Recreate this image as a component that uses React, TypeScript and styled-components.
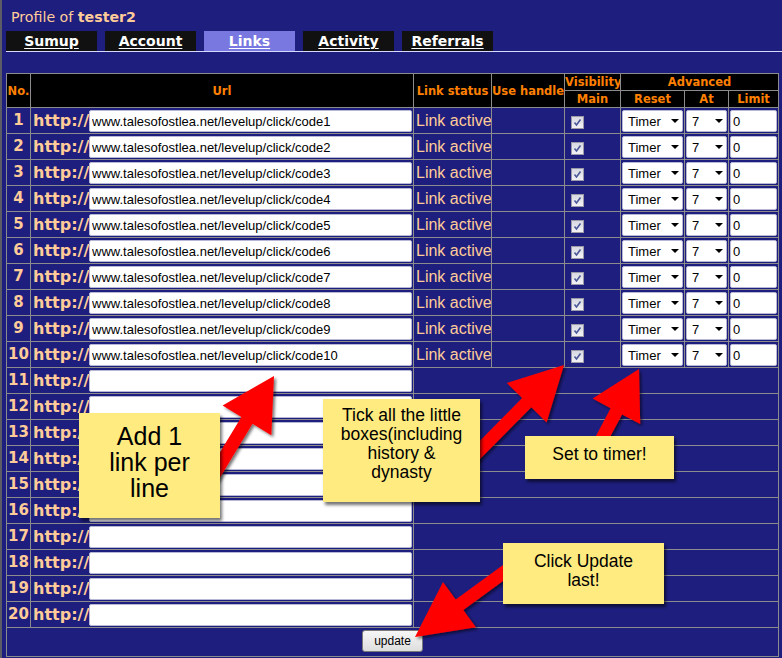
import React from "react";
import styled, { createGlobalStyle } from "styled-components";

const NAVY = "#1e1e7e";
const PEACH = "#ffcc99";
const ORANGE = "#ff8000";

const GlobalStyle = createGlobalStyle`
  html, body {
    margin: 0;
    padding: 0;
    background: ${NAVY};
  }
  body {
    font-family: "DejaVu Sans", Verdana, sans-serif;
  }
`;

const Page = styled.div`
  position: relative;
  width: 782px;
  height: 658px;
  box-sizing: border-box;
  border-left: 2px solid #5c5c66;
  background: ${NAVY};
  overflow: hidden;
`;

const Title = styled.h1`
  margin: 0;
  padding: 8px 0 0 9px;
  font: 400 14.2px/18px "DejaVu Sans", Verdana, sans-serif;
  color: ${PEACH};

  b {
    font-weight: 700;
  }
`;

const TabBar = styled.nav`
  display: flex;
  gap: 8px;
  margin: 5px 0 0 4px;
  border-bottom: 1px solid #d8d8ff;
`;

const Tab = styled.a<{ $active?: boolean }>`
  display: block;
  width: 91px;
  height: 20px;
  background: ${(p) => (p.$active ? "#7878e0" : "#111111")};
  color: #ffffff;
  font: 700 14px/21px "DejaVu Sans", Verdana, sans-serif;
  text-align: center;
  text-decoration: underline;
  text-underline-offset: 2px;
`;

const LinkTable = styled.table`
  border-collapse: collapse;
  table-layout: fixed;
  width: 773px;
  margin: 21px 0 0 4px;

  th,
  td {
    border: 1px solid #8c8c8c;
    padding: 0;
  }
`;

const HeadCell = styled.th`
  background: #000000;
  color: ${ORANGE};
  font: 700 11.5px/16px "DejaVu Sans", Verdana, sans-serif;
  text-align: center;
  white-space: nowrap;
  overflow: hidden;
`;

const NumCell = styled.td`
  color: ${PEACH};
  font: 700 15px/25px "DejaVu Sans", Verdana, sans-serif;
  text-align: center;
  white-space: nowrap;
  overflow: hidden;
`;

const FieldWrap = styled.div`
  display: flex;
  align-items: center;
  height: 25px;
  padding: 0 1px;
`;

const Proto = styled.span`
  flex: none;
  width: 57px;
  padding-left: 1px;
  box-sizing: border-box;
  color: ${PEACH};
  font: 700 16px/20px "DejaVu Sans", Verdana, sans-serif;
  white-space: nowrap;
`;

const TextField = styled.input`
  box-sizing: border-box;
  flex: 1;
  min-width: 0;
  width: 100%;
  height: 22px;
  margin: 1px 0 0;
  border: 1px solid #b8b8d4;
  border-radius: 2px;
  background: #ffffff;
  color: #000000;
  font: 13px "Liberation Sans", Arial, sans-serif;
  padding: 0 2px;
  outline: none;
`;

const StatusCell = styled.td`
  color: ${PEACH};
  font: 16px/25px "Liberation Sans", Arial, sans-serif;
  padding-left: 2px !important;
  white-space: nowrap;
  overflow: hidden;
`;

const PadCell = styled.td<{ $padLeft?: number }>`
  padding: 0 1px 0 ${(p) => p.$padLeft ?? 1}px !important;
  vertical-align: middle;
`;

const Check = styled.span`
  display: inline-flex;
  align-items: center;
  justify-content: center;
  width: 13px;
  height: 13px;
  margin-top: 1px;
  box-sizing: border-box;
  border: 1px solid #9a9aa8;
  background: linear-gradient(#d8d8e2, #f2f2f6);
  vertical-align: middle;
`;

const SelectBox = styled.div`
  display: flex;
  align-items: center;
  justify-content: space-between;
  box-sizing: border-box;
  height: 22px;
  margin-top: 1px;
  border: 1px solid #b8b8d4;
  border-radius: 2px;
  background: #ffffff;
  color: #000000;
  font: 13px "Liberation Sans", Arial, sans-serif;
  padding: 0 3px 0 5px;
`;

const Caret = styled.span`
  width: 0;
  height: 0;
  border-left: 4px solid transparent;
  border-right: 4px solid transparent;
  border-top: 4px solid #000000;
`;

const FooterCell = styled.td`
  text-align: center;
  padding: 2px 0 4px !important;
`;

const UpdateButton = styled.button`
  height: 22px;
  width: 61px;
  padding: 0;
  border: 1px solid #7a7a7a;
  border-radius: 3px;
  background: linear-gradient(#f6f6f6, #dedede);
  color: #000000;
  font: 12px "Liberation Sans", Arial, sans-serif;
`;

const Overlay = styled.svg`
  position: absolute;
  left: -2px;
  top: 0;
  pointer-events: none;
`;

const Note = styled.div<{
  $x: number;
  $y: number;
  $w: number;
  $h: number;
  $size: number;
  $lh: number;
  $pad: number;
}>`
  position: absolute;
  left: ${(p) => p.$x - 2}px;
  top: ${(p) => p.$y}px;
  width: ${(p) => p.$w}px;
  height: ${(p) => p.$h}px;
  box-sizing: border-box;
  padding-top: ${(p) => p.$pad}px;
  background: #ffeb7f;
  box-shadow: 2px 3px 3px rgba(0, 0, 0, 0.55);
  color: #000000;
  font: ${(p) => p.$size}px/${(p) => p.$lh}px "Liberation Sans", Arial, sans-serif;
  text-align: center;
`;

type Pt = [number, number];

function arrowPoints(tail: Pt, tip: Pt, headL: number, headW: number, shaft = 13) {
  const dx = tip[0] - tail[0];
  const dy = tip[1] - tail[1];
  const len = Math.hypot(dx, dy);
  const ux = dx / len;
  const uy = dy / len;
  const px = -uy;
  const py = ux;
  const bx = tip[0] - ux * headL;
  const by = tip[1] - uy * headL;
  const s = shaft / 2;
  const h = headW / 2;
  const pts: Pt[] = [
    [tail[0] + px * s, tail[1] + py * s],
    [bx + px * s, by + py * s],
    [bx + px * h, by + py * h],
    tip,
    [bx - px * h, by - py * h],
    [bx - px * s, by - py * s],
    [tail[0] - px * s, tail[1] - py * s],
  ];
  return pts.map((p) => `${p[0].toFixed(1)},${p[1].toFixed(1)}`).join(" ");
}

const arrows: { tail: Pt; tip: Pt; headL: number; headW: number }[] = [
  { tail: [212, 478], tip: [274, 376], headL: 52, headW: 57 },
  { tail: [468, 462], tip: [564, 365], headL: 53, headW: 56 },
  { tail: [600, 442], tip: [639, 369], headL: 48, headW: 54 },
  { tail: [514, 565], tip: [415, 637], headL: 55, headW: 56 },
];

const tabs = ["Sumup", "Account", "Links", "Activity", "Referrals"];
const rows = Array.from({ length: 20 }, (_, i) => i + 1);

const App = () => {
  return (
    <Page>
      <GlobalStyle />
      <Title>
        Profile of <b>tester2</b>
      </Title>
      <TabBar>
        {tabs.map((t) => (
          <Tab key={t} $active={t === "Links"}>
            {t}
          </Tab>
        ))}
      </TabBar>

      <LinkTable>
        <colgroup>
          <col style={{ width: 24 }} />
          <col style={{ width: 383 }} />
          <col style={{ width: 78 }} />
          <col style={{ width: 73 }} />
          <col style={{ width: 56 }} />
          <col style={{ width: 64 }} />
          <col style={{ width: 44 }} />
          <col style={{ width: 50 }} />
        </colgroup>
        <thead>
          <tr>
            <HeadCell rowSpan={2}>No.</HeadCell>
            <HeadCell rowSpan={2}>Url</HeadCell>
            <HeadCell rowSpan={2}>Link status</HeadCell>
            <HeadCell rowSpan={2}>Use handle</HeadCell>
            <HeadCell>Visibility</HeadCell>
            <HeadCell colSpan={3}>Advanced</HeadCell>
          </tr>
          <tr>
            <HeadCell>Main</HeadCell>
            <HeadCell>Reset</HeadCell>
            <HeadCell>At</HeadCell>
            <HeadCell>Limit</HeadCell>
          </tr>
        </thead>
        <tbody>
          {rows.map((n) => (
            <tr key={n}>
              <NumCell>{n}</NumCell>
              <td>
                <FieldWrap>
                  <Proto>http://</Proto>
                  <TextField readOnly defaultValue={n <= 10 ? `www.talesofostlea.net/levelup/click/code${n}` : ""} />
                </FieldWrap>
              </td>
              {n <= 10 ? (
                <>
                  <StatusCell>Link active</StatusCell>
                  <td />
                  <PadCell $padLeft={6}>
                    <Check>
                      <svg width="9" height="9" viewBox="0 0 9 9">
                        <polyline points="1.5,4.5 3.5,7 7.5,1.5" fill="none" stroke="#4a5898" strokeWidth="1.6" />
                      </svg>
                    </Check>
                  </PadCell>
                  <PadCell>
                    <SelectBox>
                      Timer
                      <Caret />
                    </SelectBox>
                  </PadCell>
                  <PadCell>
                    <SelectBox>
                      7
                      <Caret />
                    </SelectBox>
                  </PadCell>
                  <PadCell>
                    <FieldWrap style={{ padding: 0 }}>
                      <TextField readOnly defaultValue="0" />
                    </FieldWrap>
                  </PadCell>
                </>
              ) : (
                <td colSpan={6} />
              )}
            </tr>
          ))}
          <tr>
            <FooterCell colSpan={8}>
              <UpdateButton>update</UpdateButton>
            </FooterCell>
          </tr>
        </tbody>
      </LinkTable>

      <Overlay width="782" height="658" viewBox="0 0 782 658">
        <defs>
          <filter id="arrowShadow" x="-20%" y="-20%" width="140%" height="140%">
            <feDropShadow dx="2" dy="2" stdDeviation="1.5" floodColor="#000" floodOpacity="0.55" />
          </filter>
        </defs>
        {arrows.map((a, i) => (
          <polygon key={i} points={arrowPoints(a.tail, a.tip, a.headL, a.headW)} fill="#ff0000" filter="url(#arrowShadow)" />
        ))}
      </Overlay>

      <Note $x={79} $y={413} $w={141} $h={105} $size={25} $lh={26} $pad={10}>
        Add 1
        <br />
        link per
        <br />
        line
      </Note>
      <Note $x={323} $y={399} $w={157} $h={103} $size={17.5} $lh={19} $pad={7}>
        Tick all the little
        <br />
        boxes(including
        <br />
        history &amp;
        <br />
        dynasty
      </Note>
      <Note $x={525} $y={436} $w={149} $h={43} $size={17.5} $lh={20} $pad={8}>
        Set to timer!
      </Note>
      <Note $x={503} $y={543} $w={161} $h={61} $size={17.5} $lh={19} $pad={9}>
        Click Update
        <br />
        last!
      </Note>
    </Page>
  );
};

export default App;
